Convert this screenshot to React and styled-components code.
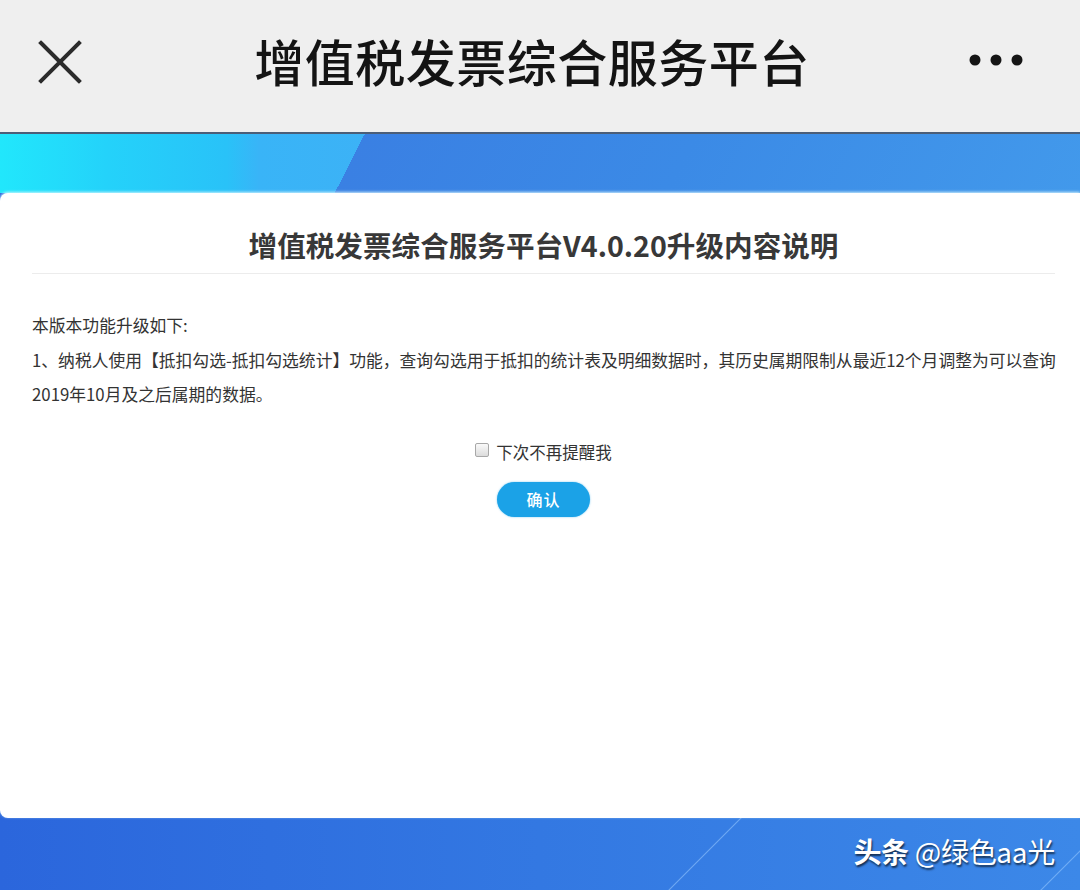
import React from 'react';
import styled, { createGlobalStyle } from 'styled-components';

const GlobalStyle = createGlobalStyle`
  html, body {
    margin: 0;
    padding: 0;
    background: #efefef;
  }
  body {
    font-family: "Noto Sans CJK SC", "Noto Sans", sans-serif;
  }
  * {
    box-sizing: border-box;
  }
`;

function CloseIcon() {
  return (
    <svg width="44" height="44" viewBox="0 0 44 44">
      <path
        d="M3 3 L41 41 M41 3 L3 41"
        stroke="#2b2b2b"
        strokeWidth="4"
        strokeLinecap="square"
        fill="none"
      />
    </svg>
  );
}

function MoreIcon() {
  return (
    <svg width="56" height="14" viewBox="0 0 56 14">
      <circle cx="7" cy="7" r="5.5" fill="#151515" />
      <circle cx="28" cy="7" r="5.5" fill="#151515" />
      <circle cx="49" cy="7" r="5.5" fill="#151515" />
    </svg>
  );
}

function App() {
  const [noRemind, setNoRemind] = React.useState(false);

  return (
    <>
      <GlobalStyle />
      <Screen>
        <TopBar>
          <IconButton>
            <CloseIcon />
          </IconButton>
          <BarTitle>增值税发票综合服务平台</BarTitle>
          <IconButton $right>
            <MoreIcon />
          </IconButton>
        </TopBar>

        <Stage>
          <Band />
          <Card>
            <CardHeading>增值税发票综合服务平台V4.0.20升级内容说明</CardHeading>
            <Notes>
              <p>本版本功能升级如下:</p>
              <p>
                1、纳税人使用【抵扣勾选-抵扣勾选统计】功能，查询勾选用于抵扣的统计表及明细数据时，其历史属期限制从最近12个月调整为可以查询
                <br />
                2019年10月及之后属期的数据。
              </p>
            </Notes>
            <RemindRow>
              <Check
                type="checkbox"
                checked={noRemind}
                onChange={(e) => setNoRemind(e.target.checked)}
              />
              下次不再提醒我
            </RemindRow>
            <ConfirmButton>确认</ConfirmButton>
          </Card>
          <Footer>
            <Watermark>
              <b>头条</b> @绿色aa光
            </Watermark>
          </Footer>
        </Stage>
      </Screen>
    </>
  );
}

const Screen = styled.div`
  width: 1080px;
  height: 890px;
  display: flex;
  flex-direction: column;
  overflow: hidden;
`;

const TopBar = styled.header`
  height: 134px;
  flex-shrink: 0;
  display: grid;
  grid-template-columns: 140px 1fr 156px;
  align-items: center;
  background: #efefef;
  border-bottom: 2px solid #4b5e78;
`;

const IconButton = styled.div`
  display: flex;
  align-items: center;
  justify-content: ${(p) => (p.$right ? 'flex-end' : 'flex-start')};
  padding: ${(p) => (p.$right ? '0 56px 0 0' : '0 0 0 38px')};
  margin-top: ${(p) => (p.$right ? '-12px' : '-8px')};
`;

const BarTitle = styled.h1`
  margin: 0;
  margin-top: -12px;
  text-align: center;
  font-size: 50px;
  font-weight: 500;
  color: #141414;
  letter-spacing: 0.5px;
`;

const Stage = styled.div`
  flex: 1;
  display: flex;
  flex-direction: column;
  background: linear-gradient(90deg, #2b66dc 0%, #3378e2 50%, #3c88e8 100%);
`;

const Band = styled.div`
  height: 59px;
  flex-shrink: 0;
  background:
    linear-gradient(117deg, transparent 0 325px, #3a80e3 325px, #3b8ae6 620px, #4299eb 100%),
    linear-gradient(90deg, #21e7fc 0%, #24d2fa 10%, #29c2f8 21%, #39b4f7 24%, #3cb2f6 34%);
`;

const Card = styled.main`
  height: 625px;
  flex-shrink: 0;
  display: flex;
  flex-direction: column;
  align-items: center;
  padding: 32px 25px 0 32px;
  background: #ffffff;
  border-radius: 8px 0 0 8px;
  box-shadow: 0 -1px 3px rgba(220, 250, 255, 0.9);
  color: #333333;
`;

const CardHeading = styled.h2`
  align-self: stretch;
  margin: 0;
  padding-bottom: 8px;
  border-bottom: 1px solid #ececec;
  text-align: center;
  font-size: 28.6px;
  line-height: 40px;
  font-weight: 700;
  color: #383838;
`;

const Notes = styled.div`
  align-self: stretch;
  margin-top: 34px;
  font-size: 16.8px;
  line-height: 34.5px;
  color: #333333;
  white-space: nowrap;

  p {
    margin: 0;
  }
`;

const RemindRow = styled.label`
  margin-top: 28px;
  height: 24px;
  display: flex;
  align-items: center;
  gap: 7px;
  font-size: 16.5px;
  color: #333333;
`;

const Check = styled.input`
  appearance: none;
  margin: 0;
  width: 14px;
  height: 14px;
  border: 1px solid #a8a8a8;
  border-radius: 2px;
  background: linear-gradient(#fafafa, #dcdcdc);
  margin-top: -3px;

  &:checked {
    background: #1da1e6;
    border-color: #1a8ccc;
  }
`;

const ConfirmButton = styled.button`
  margin-top: 18px;
  width: 93px;
  height: 35px;
  border: none;
  border-radius: 18px;
  background: #1ba2e7;
  box-shadow: 0 0 2px rgba(27, 162, 231, 0.6);
  color: #ffffff;
  font-family: "Noto Sans CJK SC", sans-serif;
  font-size: 16px;
  font-weight: 500;
  letter-spacing: 1px;
  cursor: pointer;
`;

const Footer = styled.footer`
  flex: 1;
  display: flex;
  justify-content: flex-end;
  align-items: center;
  padding-right: 25px;
  padding-bottom: 6px;
  background:
    linear-gradient(135deg, transparent 0 calc(50% - 1px), rgba(150, 200, 255, 0.55) 50%, transparent calc(50% + 1px)) 640px 0 / 130px 72px no-repeat,
    linear-gradient(135deg, transparent 0 calc(50% - 1px), rgba(150, 200, 255, 0.55) 50%, transparent calc(50% + 1px)) 1030px 30px / 64px 42px no-repeat;
`;

const Watermark = styled.div`
  font-size: 28px;
  color: #ffffff;
  text-shadow: 1px 2px 2px rgba(0, 0, 0, 0.65);
  letter-spacing: -0.3px;

  b {
    font-weight: 700;
  }
`;

export default App;
